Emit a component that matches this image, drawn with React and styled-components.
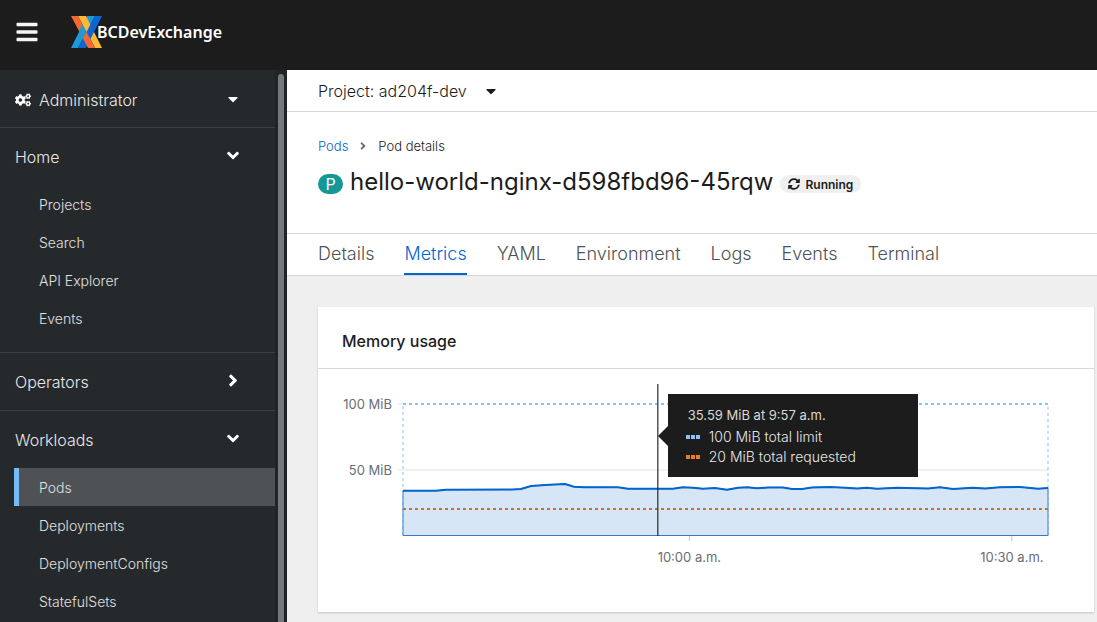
import React from 'react';
import styled, { createGlobalStyle, css } from 'styled-components';
import { FaBars, FaCogs, FaCaretDown, FaAngleDown, FaAngleRight, FaSyncAlt } from 'react-icons/fa';

const Global = createGlobalStyle`
  *, *::before, *::after { box-sizing: border-box; }
  body {
    margin: 0;
    background: #efefef;
    color: #1c1c1c;
    font-family: Inter, "Liberation Sans", sans-serif;
    font-size: 14px;
    font-weight: 300;
  }
  button { font: inherit; color: inherit; background: none; border: 0; padding: 0; cursor: pointer; }
  a { color: inherit; text-decoration: none; }
  ul, ol { list-style: none; margin: 0; padding: 0; }
  h1, h2, p { margin: 0; }
`;

const Page = styled.div`
  height: 100vh;
  display: flex;
  flex-direction: column;
  overflow: hidden;
`;

const Masthead = styled.header`
  flex: none;
  height: 70px;
  padding: 0 15px 6px;
  display: flex;
  align-items: center;
  gap: 32px;
  background: #1c1c1c;
  color: #f5f5f5;
`;

const MenuButton = styled.button`
  display: flex;
  font-size: 24px;
`;

const Brand = styled.a`
  display: flex;
  align-items: center;
  font: 600 16px/24px "Noto Sans", sans-serif;
  color: #fff;
  svg { margin-right: -5px; }
`;

const Body = styled.div`
  flex: 1;
  min-height: 0;
  display: flex;
`;

const Sidebar = styled.aside`
  flex: none;
  width: 287px;
  display: flex;
  overflow: hidden;
  background: #212427;
  color: #e8e8e8;
`;

const Nav = styled.nav`
  flex: 1;
  background: #26292c;
`;

const Scrollbar = styled.div`
  width: 12px;
  padding: 4px 3px 0;
  display: flex;
`;

const Thumb = styled.div`
  flex: 1;
  border-radius: 4px 4px 0 0;
  background: #77787a;
`;

const NavToggle = styled.button`
  width: 100%;
  height: 57px;
  padding: 0 32px 0 15px;
  display: flex;
  align-items: center;
  gap: 8px;
  font-size: 16px;
  text-align: left;
  span { flex: 1; }
  svg { color: #fff; }
  svg:last-child { width: 20px; margin-bottom: 2px; }
`;

const PerspectiveToggle = styled(NavToggle)`
  padding-top: 2px;
`;

const NavSection = styled.section`
  border-bottom: 1px solid #3c3f42;
  padding-bottom: ${(p) => (p.$open ? 15 : 0)}px;
`;

const NavLink = styled.a`
  display: block;
  margin-left: 14px;
  padding: 2px 0 0 20px;
  border-left: 5px solid transparent;
  line-height: 36px;
  color: #e0e0e0;
  ${(p) => p.$active && css`
    background: #4f5255;
    border-left-color: #73bcf7;
  `}
`;

const Main = styled.main`
  flex: 1;
  min-width: 0;
  display: flex;
  flex-direction: column;
`;

const ProjectBar = styled.div`
  height: 42px;
  padding: 0 31px;
  display: flex;
  background: #fff;
  border-bottom: 1px solid #d8d8d8;
`;

const ProjectButton = styled.button`
  display: flex;
  align-items: center;
  gap: 16px;
  font-size: 16px;
`;

const Heading = styled.div`
  height: 122px;
  padding: 24px 31px 0;
  background: #fff;
  border-bottom: 1px solid #d8d8d8;
`;

const Crumbs = styled.ol`
  display: flex;
  align-items: center;
  gap: 9px;
  font-size: 13px;
  line-height: 20px;
  color: #1c1c1c;
  a { color: #06c; }
  svg { display: block; color: #6a6e73; }
`;

const TitleRow = styled.div`
  margin-top: 8px;
  display: flex;
  align-items: center;
  gap: 7px;
`;

const KindBadge = styled.span`
  width: 25px;
  margin-top: 4px;
  border-radius: 10px;
  background: #159895;
  color: #fff;
  font-size: 16px;
  font-weight: 400;
  line-height: 20px;
  text-align: center;
`;

const Title = styled.h1`
  font-size: 24px;
  line-height: 36px;
  font-weight: 400;
`;

const Status = styled.span`
  height: 18px;
  margin-top: 4px;
  padding: 0 8px;
  display: flex;
  align-items: center;
  gap: 5px;
  border-radius: 9px;
  background: #efefef;
  font-size: 12px;
  font-weight: 600;
`;

const Tabs = styled.nav`
  height: 42px;
  padding: 0 31px;
  display: flex;
  gap: 30px;
  background: #fff;
  border-bottom: 1px solid #d8d8d8;
`;

const Tab = styled.a`
  font-size: 18px;
  line-height: 40px;
  color: ${(p) => (p.$active ? '#06c' : '#4f5255')};
  box-shadow: inset 0 -2px ${(p) => (p.$active ? '#06c' : 'transparent')};
`;

const Content = styled.div`
  padding: 31px 3px 10px 31px;
`;

const Card = styled.section`
  background: #fff;
  box-shadow: 0 1px 2px rgba(0, 0, 0, 0.18);
`;

const CardTitle = styled.h2`
  padding: 8px 24px 0;
  border-bottom: 1px solid #d8d8d8;
  font-size: 16px;
  line-height: 53px;
  font-weight: 500;
`;

const ChartArea = styled.div`
  padding: 35px 46px 76px 85px;
`;

const Plot = styled.div`
  position: relative;
  height: 132px;
`;

const PlotSvg = styled.svg`
  display: block;
  overflow: visible;
  font-size: 13px;
  font-weight: 400;
  fill: #6a6e73;
`;

const Tooltip = styled.div`
  position: absolute;
  left: 39.5%;
  top: -10px;
  margin-left: 10px;
  width: 250px;
  height: 83px;
  padding: 10px 18px;
  background: #1c1c1c;
  color: #e8e8e8;
  font-size: 14px;
  line-height: 20px;
  &::before {
    content: "";
    position: absolute;
    left: -10px;
    top: 32px;
    border: solid transparent;
    border-width: 10px 10px 10px 0;
    border-right-color: #1c1c1c;
  }
  p { padding-left: 2px; font-size: 13px; font-weight: 400; line-height: 23px; color: #d8d8d8; }
`;

const LegendRow = styled.li`
  display: flex;
  align-items: center;
  gap: 9px;
`;

const series = [
  [403, 490.7], [436, 490.7], [446, 489.7], [512, 489.6], [521, 489], [531, 486], [545, 485],
  [565, 484], [574, 486.8], [584, 487.2], [618, 487.3], [628, 488.8], [673, 488.7],
  [682.7, 487.3], [693, 487.7], [703, 488.7], [715, 488], [727, 489.7], [738, 487.8], [747, 487.3],
  [757, 488.3], [768, 487.4], [783, 487.4], [792, 489], [802, 489], [812, 487.4], [830, 487],
  [845, 487.7], [857, 488.5], [867, 487.8], [877, 488.8], [897, 487.7], [907, 488], [928, 488.5],
  [940, 487.2], [953, 489], [973, 487.7], [985, 488.5], [1000, 487.2], [1020, 487], [1038, 488.7], [1048, 488],
];

const linePoints = series.map(([x, y]) => `${(x - 403).toFixed(1)},${(y - 404).toFixed(1)}`).join(' ');

function Logo() {
  return (
    <svg width="31" height="32" viewBox="0 0 31 32" aria-hidden="true">
      <path d="M16 0H24L7 32H0Z" fill="#1e9ad6" />
      <path d="M7 0H15L31 32H24Z" fill="#fdb93a" />
      <path d="M24 0H31L15 32H7Z" fill="#0c66d4" />
      <path d="M0 0H7L24 32H17Z" fill="#f26a32" />
      <path d="M11.5 8.5L15.5 16L12 22.6L8 15Z" fill="#1e9ad6" />
    </svg>
  );
}

function Dots({ color }) {
  return (
    <svg width="14" height="4" aria-hidden="true" fill={color}>
      <rect width="4" height="4" />
      <rect x="5" width="4" height="4" />
      <rect x="10" width="4" height="4" />
    </svg>
  );
}

function NavGroup({ title, items = [], active }) {
  const open = items.length > 0;
  return (
    <NavSection $open={open}>
      <NavToggle aria-expanded={open}>
        <span>{title}</span>
        {open ? <FaAngleDown size={19} /> : <FaAngleRight size={19} />}
      </NavToggle>
      {open && (
        <ul>
          {items.map((item) => (
            <li key={item}><NavLink href="#" $active={item === active}>{item}</NavLink></li>
          ))}
        </ul>
      )}
    </NavSection>
  );
}

function MemoryChart() {
  return (
    <Plot>
      <PlotSvg width="100%" height="132" role="img" aria-label="Memory usage over time">
        <g stroke="#e4e4e4">
          <line x1="-5" x2="100%" y1="66" y2="66" />
          <line x1="-5" x2="0" y1="0" y2="0" />
        </g>
        <svg width="100%" height="132" viewBox="0 0 645 132" preserveAspectRatio="none" overflow="visible">
          <rect width="645" height="131.5" fill="none" stroke="#8bc1f7" strokeDasharray="3 3" vectorEffect="non-scaling-stroke" />
          <polygon points={`0,131.5 ${linePoints} 645,131.5`} fill="#d7e6f7" stroke="#3a78cc" vectorEffect="non-scaling-stroke" />
          <polyline points={linePoints} fill="none" stroke="#06c" strokeWidth="2" strokeLinejoin="round" vectorEffect="non-scaling-stroke" />
        </svg>
        <line x2="100%" stroke="#8bc1f7" strokeWidth="2" strokeDasharray="3 3" />
        <line x2="100%" y1="105" y2="105" stroke="#c9731f" strokeWidth="2" strokeDasharray="3 3" />
        <g stroke="#c4c4c4">
          <line x1="44.4%" x2="44.4%" y1="132" y2="137" />
          <line x1="94.4%" x2="94.4%" y1="132" y2="137" />
        </g>
        <line x1="39.5%" x2="39.5%" y1="-20" y2="132" stroke="#1c1c1c" strokeOpacity="0.75" strokeWidth="1.5" />
        <g textAnchor="end">
          <text x="-11" y="5">100 MiB</text>
          <text x="-11" y="71">50 MiB</text>
        </g>
        <g textAnchor="middle">
          <text x="44.4%" y="158">10:00 a.m.</text>
          <text x="94.4%" y="158">10:30 a.m.</text>
        </g>
      </PlotSvg>
      <Tooltip role="tooltip">
        <p>35.59 MiB at 9:57 a.m.</p>
        <ul>
          <LegendRow><Dots color="#8bc1f7" />100 MiB total limit</LegendRow>
          <LegendRow><Dots color="#ec7a28" />20 MiB total requested</LegendRow>
        </ul>
      </Tooltip>
    </Plot>
  );
}

const tabs = ['Details', 'Metrics', 'YAML', 'Environment', 'Logs', 'Events', 'Terminal'];

export default function App() {
  return (
    <Page>
      <Global />
      <Masthead>
        <MenuButton aria-label="Global navigation"><FaBars /></MenuButton>
        <Brand href="#"><Logo />BCDevExchange</Brand>
      </Masthead>
      <Body>
        <Sidebar>
          <Nav aria-label="Main">
            <NavSection>
              <PerspectiveToggle>
                <FaCogs size={16} />
                <span>Administrator</span>
                <FaCaretDown size={16} />
              </PerspectiveToggle>
            </NavSection>
            <NavGroup title="Home" items={['Projects', 'Search', 'API Explorer', 'Events']} />
            <NavGroup title="Operators" />
            <NavGroup title="Workloads" active="Pods" items={['Pods', 'Deployments', 'DeploymentConfigs', 'StatefulSets']} />
          </Nav>
          <Scrollbar><Thumb /></Scrollbar>
        </Sidebar>
        <Main>
          <ProjectBar>
            <ProjectButton>Project: ad204f-dev <FaCaretDown size={16} /></ProjectButton>
          </ProjectBar>
          <Heading>
            <Crumbs>
              <li><a href="#">Pods</a></li>
              <li><FaAngleRight size={12} /></li>
              <li>Pod details</li>
            </Crumbs>
            <TitleRow>
              <KindBadge>P</KindBadge>
              <Title>hello-world-nginx-d598fbd96-45rqw</Title>
              <Status><FaSyncAlt size={12} />Running</Status>
            </TitleRow>
          </Heading>
          <Tabs aria-label="Pod">
            {tabs.map((tab) => (
              <Tab key={tab} href="#" $active={tab === 'Metrics'}>{tab}</Tab>
            ))}
          </Tabs>
          <Content>
            <Card>
              <CardTitle>Memory usage</CardTitle>
              <ChartArea><MemoryChart /></ChartArea>
            </Card>
          </Content>
        </Main>
      </Body>
    </Page>
  );
}
